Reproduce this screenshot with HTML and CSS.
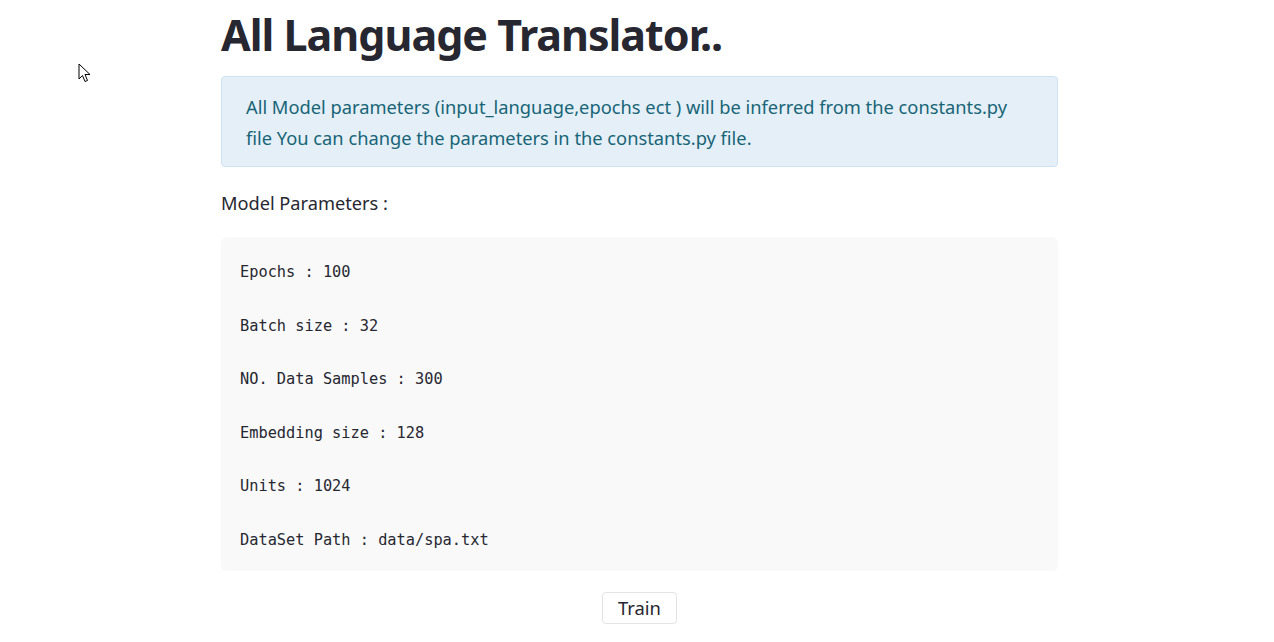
FILE: index.html
```html
<!DOCTYPE html>
<html>
<head>
<meta charset="utf-8">
<link rel="stylesheet" href="styles.css">
</head>
<body>
<main class="main">
  <h1 class="title">All Language Translator..</h1>
  <div class="info">All Model parameters (input_language,epochs ect ) will be inferred from the constants.py file You can change the parameters in the constants.py file.</div>
  <p class="label">Model Parameters :</p>
  <pre class="code">Epochs : 100

Batch size : 32

NO. Data Samples : 300

Embedding size : 128

Units : 1024

DataSet Path : data/spa.txt</pre>
  <div class="btn-row"><button class="btn">Train</button></div>
</main>
<svg class="cursor" width="14" height="21" viewBox="0 0 14 21"><path d="M1 1 L1 16 L4.5 12.5 L7 18.5 L9.5 17.5 L7 11.5 L12 11.5 Z" fill="#fff" stroke="#000" stroke-width="1" stroke-linejoin="miter"/></svg>
</body>
</html>
```
FILE: styles.css
```css
html, body {
  margin: 0;
  padding: 0;
  background: #ffffff;
}
body {
  font-family: "Noto Sans", "Open Sans", sans-serif;
  color: #262730;
}
.main {
  width: 837px;
  margin: 0 0 0 221px;
  display: flex;
  flex-direction: column;
}
.title {
  margin: 6px 0 0 0;
  font-size: 43px;
  line-height: 58px;
  font-weight: 700;
  color: #262730;
  letter-spacing: -1px;
}
.info {
  margin-top: 12px;
  box-sizing: border-box;
  height: 91px;
  padding: 14px 28px 0 24px;
  background: #e5eff8;
  border: 1px solid #d0e2f0;
  border-radius: 4px;
  color: #176576;
  font-size: 18.3px;
  line-height: 31px;
}
.label {
  margin: 22px 0 0 0;
  font-size: 18.2px;
  line-height: 28px;
}
.code {
  margin: 20px 0 0 0;
  box-sizing: border-box;
  height: 334px;
  padding: 22px 19px 0 19px;
  background: #f9f9f9;
  border-radius: 6px;
  font-family: "DejaVu Sans Mono", monospace;
  font-size: 15.3px;
  line-height: 26.8px;
  color: #262730;
}
.btn-row {
  margin-top: 21px;
  display: flex;
  justify-content: center;
}
.btn {
  box-sizing: border-box;
  height: 32px;
  padding: 0 15px;
  background: #fff;
  border: 1px solid #e1e3e8;
  border-radius: 4px;
  font-family: "Noto Sans", "Open Sans", sans-serif;
  font-size: 18.4px;
  color: #262730;
  line-height: 28px;
}
.cursor {
  position: absolute;
  left: 78px;
  top: 63px;
}
```
